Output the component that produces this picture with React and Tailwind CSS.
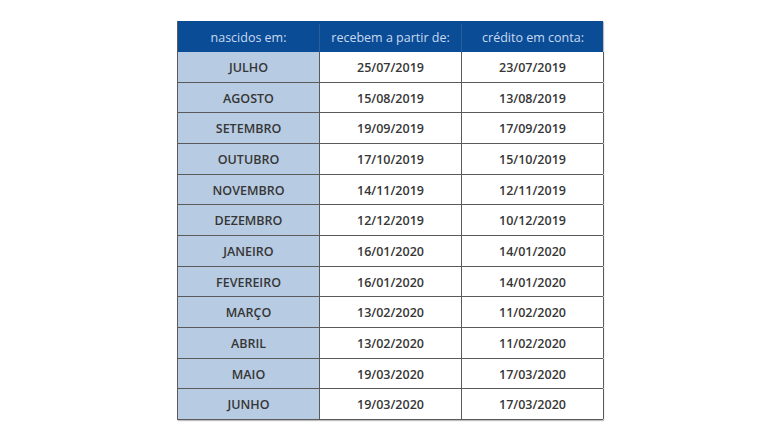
const rows = [
  ["JULHO", "25/07/2019", "23/07/2019"],
  ["AGOSTO", "15/08/2019", "13/08/2019"],
  ["SETEMBRO", "19/09/2019", "17/09/2019"],
  ["OUTUBRO", "17/10/2019", "15/10/2019"],
  ["NOVEMBRO", "14/11/2019", "12/11/2019"],
  ["DEZEMBRO", "12/12/2019", "10/12/2019"],
  ["JANEIRO", "16/01/2020", "14/01/2020"],
  ["FEVEREIRO", "16/01/2020", "14/01/2020"],
  ["MARÇO", "13/02/2020", "11/02/2020"],
  ["ABRIL", "13/02/2020", "11/02/2020"],
  ["MAIO", "19/03/2020", "17/03/2020"],
  ["JUNHO", "19/03/2020", "17/03/2020"],
];

export default function App() {
  return (
    <div className="w-[780px] h-[438px] bg-white flex justify-center pt-[21px]" style={{ fontFamily: '"Open Sans", "Noto Sans", sans-serif' }}>
      <div className="w-[426px] h-[399px] flex flex-col border-l border-[#5a5a5a] shadow-[1px_1px_1px_rgba(0,0,0,0.25)]">
        <div className="grid grid-cols-[142px_142px_142px] h-[31px] bg-[#0b4c97] text-[#c9daef] text-[12.5px] pt-[3px]">
          <div className="flex items-center justify-center border-r border-[#2a5f9e]">nascidos em:</div>
          <div className="flex items-center justify-center border-r border-[#2a5f9e]">recebem a partir de:</div>
          <div className="flex items-center justify-center">crédito em conta:</div>
        </div>
        {rows.map((r, i) => (
          <div key={i} className="grid grid-cols-[142px_142px_142px] h-[30.67px] text-[12.5px] font-semibold text-[#363636] border-b border-[#5a5a5a]">
            <div className="flex items-center justify-center bg-[#b7cbe2] border-r border-[#5a5a5a] pt-[3px]">{r[0]}</div>
            <div className="flex items-center justify-center bg-white border-r border-[#5a5a5a] pt-[3px]">{r[1]}</div>
            <div className="flex items-center justify-center bg-white border-r border-[#5a5a5a] pt-[3px]">{r[2]}</div>
          </div>
        ))}
      </div>
    </div>
  );
}
